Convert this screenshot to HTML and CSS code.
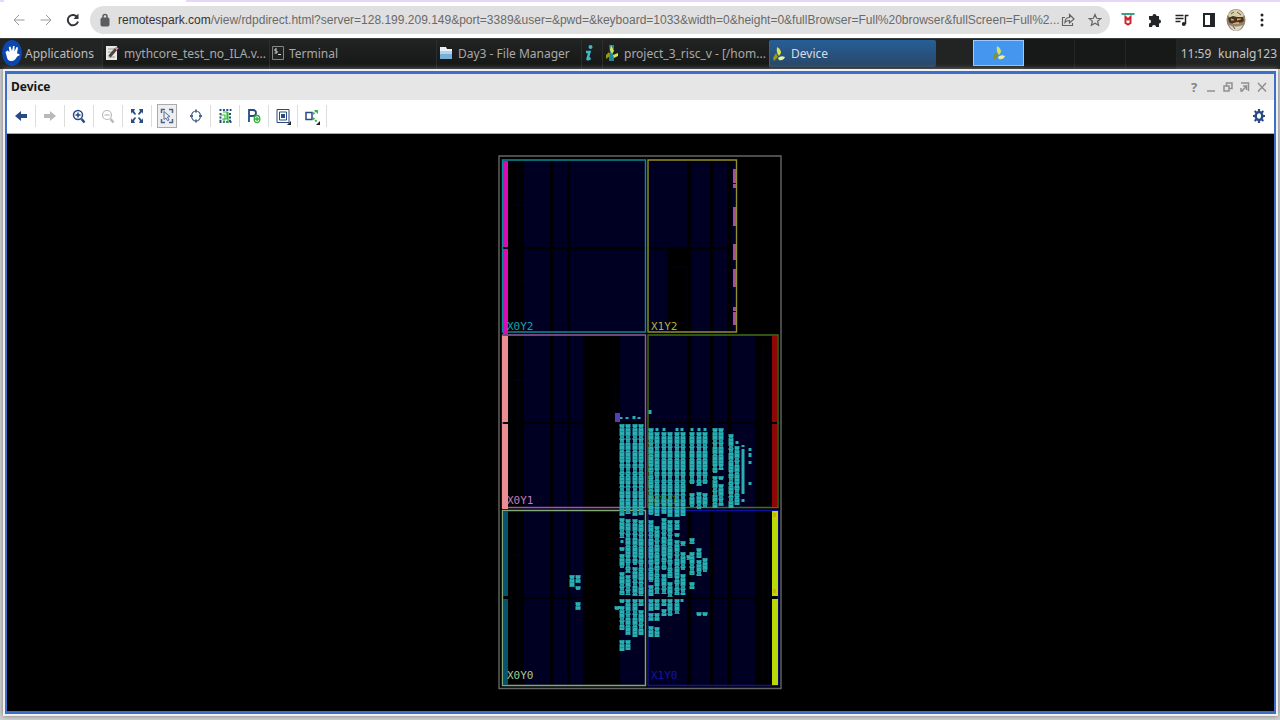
FILE: index.html
```
<!DOCTYPE html>
<html lang="en">
<head>
<meta charset="utf-8">
<title>Device</title>
<link rel="stylesheet" href="styles.css">
</head>
<body>
<header class="browser">
  <div class="tabstrip"><span class="tab"></span></div>
  <div class="navbar">
    <button class="nav-btn muted" aria-label="Back"><svg width="14" height="14" viewBox="0 0 14 14"><path d="M12.500 7H2M7 2L2 7l5 5"/></svg></button>
    <button class="nav-btn muted" aria-label="Forward"><svg width="14" height="14" viewBox="0 0 14 14"><path d="M1.500 7H12M7 2l5 5-5 5"/></svg></button>
    <button class="nav-btn reload" aria-label="Reload"><svg width="14" height="14" viewBox="0 0 14 14"><path d="M11.500 4.500A5.200 5.200 0 1 0 12 8.500"/><path class="solid" d="M12.500 0.500V6H7.500z"/></svg></button>
    <div class="address">
      <svg class="lock" width="10" height="14" viewBox="0 0 10 14"><rect x="1" y="5" width="8" height="8" rx="1"/><path d="M3 6V3.500a2 2 0 0 1 4 0V6"/></svg>
      <div class="url"><span class="host">remotespark.com</span>/view/rdpdirect.html?server=128.199.209.149&amp;port=3389&amp;user=&amp;pwd=&amp;keyboard=1033&amp;width=0&amp;height=0&amp;fullBrowser=Full%20browser&amp;fullScreen=Full%2...</div>
      <button class="pill-btn" aria-label="Share"><svg width="14" height="14" viewBox="0 0 14 14"><path d="M4 4.500H1.500v8h10V10M4 9.500c0-3.500 2-5 4.500-5V1.500L13 6 8.500 10V7.500C6.500 7.500 5 8 4 9.500z"/></svg></button>
      <button class="pill-btn" aria-label="Bookmark"><svg width="14" height="14" viewBox="0 0 14 14"><path d="M7 1.500l1.600 3.800 4.100.3-3.100 2.700 1 4L7 10.200l-3.600 2.100 1-4L1.300 5.600l4.100-.3z"/></svg></button>
    </div>
    <div class="extensions">
      <button aria-label="Shield"><svg width="14" height="16" viewBox="0 0 14 16"><path fill="#30a58a" d="M0.500 1h13v2H.5z"/><path fill="none" stroke="#d0202c" stroke-width="2" d="M4.500 5v6L7 12.500 9.500 11V5L7 7.500z"/></svg></button>
      <button aria-label="Extensions"><svg width="14" height="16" viewBox="0 0 14 16"><path fill="#222427" d="M1 4h3.500a2 2 0 1 1 4 0H11v3.500a2 2 0 1 1 0 4V15H8a2 2 0 0 0-4 0H1v-3.500a2 2 0 0 0 0-4z"/></svg></button>
      <button aria-label="Media"><svg width="14" height="16" viewBox="0 0 14 16"><path fill="none" stroke="#222427" stroke-width="1.500" d="M.5 3.500h8M.5 6.500h8M.5 9.500h5M10.500 12V3.500h3"/><circle cx="8.800" cy="12" r="2" fill="#222427"/></svg></button>
      <button aria-label="Side panel"><svg width="14" height="16" viewBox="0 0 14 16"><path fill="none" stroke="#222427" stroke-width="2" d="M2 2h10v12H2z"/><path fill="#222427" d="M8 2h4v12H8z"/></svg></button>
      <button aria-label="Profile"><svg width="20" height="22" viewBox="0 0 20 22"><ellipse cx="10" cy="11" rx="9.500" ry="11" fill="#94846b"/><path fill="#d8d0aa" d="M2 6Q10-5 18 6l-2 3H4z"/><path fill="#463321" d="M2 9l5-2 4 1 6 0 1 4q-4 3-7 1-5 3-8 0z"/><path fill="#e0aa55" d="M5 9.500l3 1v1H5zm6 0h4v1l-4 1zM7 14l6-1v2H7z"/><path fill="#d9d4cc" d="M3 16q6 3 14 0-2 5-7 6-5-1-7-6z"/><path stroke="#675644" d="M5 5l3-2M11 3l4 3M7 17l2 3"/></svg></button>
      <button aria-label="Menu"><svg width="6" height="16" viewBox="0 0 6 16"><g fill="#222427"><circle cx="3" cy="3" r="1.500"/><circle cx="3" cy="8" r="1.500"/><circle cx="3" cy="13" r="1.500"/></g></svg></button>
    </div>
  </div>
</header>

<nav class="taskbar">
  <button class="task apps"><svg width="20" height="26" viewBox="0 0 20 26"><ellipse cx="10" cy="13" rx="10" ry="13" fill="#0b47ad"/><path fill="#fff" d="M3.500 12l2-1.500 2 1.500-.7-5 1.700-.5L10 11l1-5h1.500v5.500L14.500 7l1.500.5-1 6q3 0 2.500 2-2 0-3 2-2 4-6 3.500-3-.5-3.500-3.500z"/></svg><span>Applications</span></button>
  <button class="task wide"><svg width="14" height="18" viewBox="0 0 14 18"><path fill="#e9e9e5" d="M1 2h11v14H1z"/><path stroke="#999" d="M3 5h7M3 8h4M3 13h7"/><path stroke="#4c463b" stroke-width="3" d="M4.500 12.500L11 5"/><path stroke="#db7ab1" stroke-width="3" d="M11 5l1.500-1.500"/></svg><span>mythcore_test_no_ILA.v...</span></button>
  <button class="task wide"><svg width="12" height="16" viewBox="0 0 12 16"><path fill="#202322" stroke="#858585" d="M.5 1.500h11v13H.5z"/><path fill="none" stroke="#ddd" d="M5 4H3v2h2v2H2.500M6 9.500h3"/></svg><span>Terminal</span></button>
  <button class="task files"><svg width="14" height="16" viewBox="0 0 14 16"><path fill="#e9eff4" d="M1 2h6l1 2h5v5H1z"/><path fill="#78afd9" d="M1 6h12v8H1z"/><path fill="#b3d2e9" d="M1 6h12v3H1z"/></svg><span>Day3 - File Manager</span></button>
  <button class="task info" aria-label="Information"><svg width="10" height="18" viewBox="0 0 10 18"><circle cx="6.500" cy="3" r="2" fill="#40b9cb"/><path fill="none" stroke="#40b9cb" stroke-width="2.500" d="M2 8h3.500L3.500 15q0 1 3-1"/></svg></button>
  <button class="task wide"><svg width="14" height="18" viewBox="0 0 14 18"><path fill="#258795" d="M4 1h5v4L7 8l2 4v5H4v-4H3V9h2z"/><path fill="#d8e456" d="M6 1l3 6-2 3-2-4zM8 11l5-2v3l-4 2z"/><path fill="#9c9a10" d="M4 8l1 4-4 3V11z"/></svg><span>project_3_risc_v - [/hom...</span></button>
  <button class="task wide active"><svg width="14" height="16" viewBox="0 0 14 16"><path fill="#d8e456" d="M5 1q4 2 4 6l-2 3Q4 7 5 1z"/><path fill="#9c9a10" d="M4 7l2 4-4 4-1-3z"/><path fill="#edf09b" d="M6 12q3-3 7-1-2 4-6 3z"/></svg><span>Device</span></button>
  <span class="spacer"></span>
  <button class="workspace current" aria-label="Workspace 1"><svg width="14" height="16" viewBox="0 0 14 16"><path fill="#d8e456" d="M5 1q4 2 4 6l-2 3Q4 7 5 1z"/><path fill="#89921c" d="M4 7l2 4-4 4-1-3z"/><path fill="#edf09b" d="M6 12q3-3 7-1-2 4-6 3z"/></svg></button>
  <button class="workspace" aria-label="Workspace 2"></button>
  <button class="workspace" aria-label="Workspace 3"></button>
  <button class="workspace" aria-label="Workspace 4"></button>
  <span class="clock">11:59</span>
  <span class="user">kunalg123</span>
</nav>

<main class="desktop">
<section class="window">
  <div class="titlebar">
    <h1>Device</h1>
    <div class="controls">
      <button class="help" aria-label="Help">?</button>
      <button aria-label="Minimize"><svg width="10" height="12" viewBox="0 0 10 12"><path d="M1 10h8"/></svg></button>
      <button aria-label="Restore"><svg width="10" height="12" viewBox="0 0 10 12"><path d="M1 5h5v5H1zM3.500 5V2H9v5.500H6"/></svg></button>
      <button aria-label="Float"><svg width="10" height="12" viewBox="0 0 10 12"><path d="M1 2h7.500v8M2 10l4.500-5M3 5h3.500v4M1 7v3h2"/></svg></button>
      <button aria-label="Close"><svg width="10" height="12" viewBox="0 0 10 12"><path d="M1 2l8 8.500M9 2L1 10.500"/></svg></button>
    </div>
  </div>
  <div class="toolbar">
    <button class="tool" aria-label="Previous"><svg width="16" height="18" viewBox="0 0 16 18"><path fill="#284b85" d="M2 9l6-5v3h6v4H8v3z"/></svg></button>
    <button class="tool" aria-label="Next" disabled><svg width="16" height="18" viewBox="0 0 16 18"><path fill="#b9b9b9" d="M14 9L8 4v3H2v4h6v3z"/></svg></button>
    <button class="tool" aria-label="Zoom in"><svg width="16" height="18" viewBox="0 0 16 18"><g fill="none" stroke="#284b85" stroke-width="1.500"><circle cx="7" cy="8" r="4.500"/><path d="M4.500 8h5M7 5.500v5"/><path stroke-width="2.500" d="M10.500 12l3 3.500"/></g></svg></button>
    <button class="tool" aria-label="Zoom out" disabled><svg width="16" height="18" viewBox="0 0 16 18"><g fill="none" stroke="#b9b9b9" stroke-width="1.200"><circle cx="7" cy="8" r="4.500"/><path d="M4.500 8h5"/><path stroke-width="2.500" d="M10.500 12l3 3.500"/></g></svg></button>
    <button class="tool" aria-label="Zoom fit"><svg width="16" height="18" viewBox="0 0 16 18"><path fill="#284b85" d="M2 2h4L5 4l2 3-1 1-3-3-1 2zM14 2h-4l1 2-2 3 1 1 3-3 1 2zM2 16h4l-1-2 2-3-1-1-3 3-1-2zM14 16h-4l1-2-2-3 1-1 3 3 1-2z"/></svg></button>
    <button class="tool pressed" aria-label="Select area"><svg width="16" height="18" viewBox="0 0 16 18"><path fill="none" stroke="#48658f" stroke-width="1.500" d="M2.500 6V2.500H6M10 2.500h3.500V6M2.500 12v3.500H6M10 15.500h3.500V12"/><path fill="#e6eef5" stroke="#55709c" d="M5 4.500l6 5-2.500.5 1.500 3-1.500.7L7 11l-2 1.500z"/></svg></button>
    <button class="tool" aria-label="Autofit selection"><svg width="16" height="18" viewBox="0 0 16 18"><g fill="none" stroke="#48658f" stroke-width="1.200"><ellipse cx="8" cy="9" rx="4.500" ry="5"/><path stroke-width="1.800" d="M8 2.500v3M8 12.500v3M2 9h3M11 9h3"/></g></svg></button>
    <button class="tool" aria-label="Routing resources"><svg width="16" height="18" viewBox="0 0 16 18"><path stroke="#284b85" stroke-width="2" stroke-dasharray="2 1.400" d="M2.500 3h12M2.500 15h12M3.500 6v9M13 6v9"/><path fill="none" stroke="#35ba3e" stroke-width="1.200" d="M6 5h4v7H7v4M3 8h5v4H5M11 5v11"/></svg></button>
    <button class="tool" aria-label="Draw Pblock"><svg width="16" height="18" viewBox="0 0 16 18"><path fill="none" stroke="#284b85" stroke-width="1.800" d="M3 15V3h4q3 0 3 3T7 9H3"/><ellipse cx="11" cy="12" rx="2.800" ry="3.500" fill="#fff" stroke="#2eae32" stroke-width="1.300"/><path stroke="#2eae32" stroke-width="1.300" d="M11 10v4M9 12h4"/></svg></button>
    <button class="tool" aria-label="Cell drawing"><svg width="16" height="18" viewBox="0 0 16 18"><g fill="none" stroke="#284b85"><path d="M2 2.500h12v13H2zM4.500 5h7v8h-7z"/></g><path fill="#284b85" d="M6 7h4v4H6z"/><path fill="#222" d="M16 14v4h-4z"/></svg></button>
    <button class="tool" aria-label="Show connections"><svg width="16" height="18" viewBox="0 0 16 18"><path fill="none" stroke="#284b85" stroke-width="1.500" d="M2 5.500h6v7H2z"/><path fill="none" stroke="#31b83a" stroke-width="2" stroke-dasharray="2 1" d="M9 7l4-4M9 11l4 4"/><path fill="#31b83a" d="M10 3h4v4z"/><path fill="#222" d="M16 14v4h-4z"/></svg></button>
    <button class="settings" aria-label="Settings"><svg width="14" height="16" viewBox="0 0 14 16"><ellipse cx="7" cy="8" rx="3.300" ry="4" fill="none" stroke="#284b85" stroke-width="2.500"/><path fill="none" stroke="#284b85" stroke-width="2.200" d="M7 1v2.500M7 12.500V15M1 8h2M11 8h2M2.700 3l1.500 1.500M9.800 11.500l1.500 1.500M2.700 13l1.500-1.500M9.800 4.500L11.300 3"/></svg></button>
  </div>
  <div class="canvas">
    <svg class="device" width="284" height="535" viewBox="498 155 284 535" role="img" aria-label="Device floorplan">
      <defs>
        <pattern id="grid" width="4" height="4" patternUnits="userSpaceOnUse"><path fill="#00001a" d="M0 0h4v4H0z"/><path fill="#000026" d="M0 0h4v1H0zM0 0h1v4H0z"/></pattern>
        <path id="cells" d="
M622 424V516M628 424V514M635 424V516M641 424V515
M622 518V538M622 547V551M622 554V568M622 572V595M622 599V603M622 606V630M622 640V651
M628 519V573M628 575V595M628 599V635M628 640V650
M635 519V565M635 567V596M635 599V637
M641 520V596M641 599V606M641 610V635
M651 428V515M651 520V582M651 585V596M651 599V611M651 613V621M651 626V637
M657 432V516M657 526V594M657 599V610M657 613V621M657 627V637
M664 432V514M664 518V570M664 574V594M664 599V606M664 609V616
M670 432V517M670 520V578M670 582V597M670 599V616
M677 432V517M677 520V530M677 533V537M677 540V595M677 599V614
M683 432V516M683 541V546M683 552V570M683 574V595
M692 432V484M692 493V507M692 538V544M692 552V575M692 582V589M689 555V560
M699 432V486M699 492V509M699 548V558M699 560V576M699 612V616
M705 432V484M705 493V508M705 558V572M705 612V616
M715 428V473M715 476V508M721 428V470M721 476V480M721 484V506
M731 434V508M737 446V505
M572 575V587M578 575V583M578 586V590M578 602V610M617 606V610"/>
      </defs>
      <g fill="url(#grid)">
        <path d="M524 161h26v524h-26zM553 161h14v524h-14zM570 161h75v170h-75zM570 336h13v349h-13zM620 336h25v349h-25z"/>
        <path d="M649 161h38v86h-38zM649 249h19v82h-19zM691 161h19v524h-19zM713 161h14v524h-14zM731 161h4v170h-4zM649 336h38v349h-38zM731 336h24v349h-24z"/>
      </g>
      <path class="faint" d="M509 205h15M518 161v86M514 249v80M518 281h6M509 380h15M518 336v165M509 555h15M518 511v160M670 267h17v64M615 417v-30h5M615 514v90M763 345v335M769 345v335"/>
      <path class="dark" d="M500 248h236M500 423h278M500 598h278"/>
      <g class="regions">
        <path stroke="#656565" d="M499 156h282v532.500H499z"/>
        <path stroke="#088c96" d="M502.500 160h143v172h-143z"/>
        <path stroke="#94902a" d="M648 160h88.500v172H648z"/>
        <path stroke="#9b5a9e" d="M502.500 335h143v172.500h-143z"/>
        <path stroke="#427019" d="M648 335h130v172.500H648z"/>
        <path stroke="#83a878" d="M502.500 510.500h143v175h-143z"/>
        <path stroke="#1010a0" d="M648 510.500h130v175H648z"/>
      </g>
      <g class="io">
        <path fill="#d90bb4" d="M503 161h5v86h-5zM503 249h5v85h-5z"/>
        <path fill="#eb8d92" d="M502 336h6v86h-6zM502 424h6v85h-6z"/>
        <path fill="#07526c" d="M503 511h5v85h-5zM503 599h5v86h-5z"/>
        <path fill="#8d0709" d="M772 336h5v86h-5zM772 424h5v83h-5z"/>
        <path fill="#b9d805" d="M772 511h6v85h-6zM772 599h6v86h-6z"/>
        <path fill="#f49a18" d="M773 513h3v4h-3zM773 589h3v4h-3z"/>
        <path fill="#a95095" d="M733 169h3v14h-3zM733 184h3v4h-3zM733 207h3v19h-3zM733 244h3v16h-3zM733 269h3v18h-3zM733 307h3v4h-3zM733 312h3v13h-3z"/>
      </g>
      <use class="cells-core" href="#cells"/>
      <use class="cells-edge" href="#cells"/>
      <use class="cells-lines" href="#cells"/>
      <path class="dots" d="M621 417v2M627 417v2M634 416v3M639 417v2M650 410v4M657 428v3M664 428v3M677 428v3M682 428v3M692 428v3M699 428v3M705 428v3M622 540v3M682 599v3M737 441v3M743 445v2M743 449v45M743 499v3M750 448v3M750 453v4M750 461v3M750 482v3"/>
      <path fill="#583eb2" d="M615 413h5v9h-5z"/>
      <text x="507" y="330" fill="#16a5ae">X0Y2</text>
      <text x="651" y="330" fill="#b3b33a">X1Y2</text>
      <text x="507" y="504" fill="#c27bba">X0Y1</text>
      <text x="651" y="504" fill="#609819" fill-opacity=".6">X1Y1</text>
      <text x="507" y="679" fill="#a9c890">X0Y0</text>
      <text x="651" y="679" fill="#1515a8">X1Y0</text>
    </svg>
  </div>
</section>
</main>
</body>
</html>
```
FILE: styles.css
```
* { box-sizing: border-box; }
body {
  margin: 0;
  min-height: 100vh;
  display: flex;
  flex-direction: column;
  background: #dadada;
  font-family: "Noto Sans", "Open Sans", sans-serif;
}
button {
  border: 0;
  padding: 0;
  background: none;
  color: inherit;
  font: inherit;
  display: flex;
  align-items: center;
  justify-content: center;
}
svg { display: block; flex: none; }

.browser { background: #fff; }
.tabstrip { height: 2px; background: #e9d5fb; padding-left: 4px; }
.tab { display: block; width: 182px; height: 2px; background: #fff; }
.navbar { display: flex; align-items: center; height: 36px; padding: 0 5px 0 5px; }
.nav-btn { width: 27px; height: 28px; }
.nav-btn.reload { width: 28px; margin-right: 3px; }
.nav-btn svg { fill: none; stroke: #333538; stroke-width: 2; }
.nav-btn.muted svg { stroke: #989898; stroke-width: 1; }
.nav-btn .solid { fill: #333538; stroke: none; }
.address {
  flex: 1;
  min-width: 0;
  display: flex;
  align-items: center;
  height: 28px;
  padding: 0 2px 0 10px;
  border-radius: 14px;
  background: #e0e0e0;
}
.lock { fill: #5b5d60; stroke: #5b5d60; }
.lock path { fill: none; stroke-width: 1.5; }
.url {
  flex: 1;
  min-width: 0;
  margin-left: 8px;
  color: #6a6a6a;
  font: 12px/24px "Liberation Sans", Arial, sans-serif;
  white-space: nowrap;
}
.host { color: #333; }
.pill-btn { width: 27px; height: 24px; }
.pill-btn svg { fill: none; stroke: #626466; stroke-width: 1.2; }
.extensions { display: flex; align-items: center; margin-left: 4px; }
.extensions button { width: 27px; height: 28px; }
.extensions button:last-child { width: 26px; }

.taskbar {
  display: flex;
  height: 31px;
  background: #222423;
  border-top: 1px solid #3c3e3d;
  color: #a9a9a9;
  font-size: 12px;
  white-space: nowrap;
}
.task {
  justify-content: flex-start;
  gap: 5px;
  min-width: 0;
  padding-left: 2px;
  padding-bottom: 2px;
  overflow: hidden;
  background: linear-gradient(#222423, #151616);
  border-left: 1px solid #2c2e2d;
}
.task.apps { flex: 0 0 102px; gap: 3px; padding-left: 2px; background: #222423; color: #bcbcbc; border-left: 0; }
.task.wide { flex: 0 1 167px; }
.task.files { flex: 0 1 145px; }
.task.info { flex: 0 0 21px; }
.task.active { background: linear-gradient(#265e99, #294766); color: #d4dde6; margin: 1px 0 2px; padding-bottom: 0; border-radius: 2px; border-color: #2a659f; }
.spacer { flex: 1; }
.workspace { flex: 0 0 51px; background: #171818; border-right: 1px solid #242625; }
.workspace.current { background: #4496ee; border: 1px solid #9ccaff; margin: 1px 0 3px; }
.clock, .user { display: flex; align-items: center; justify-content: center; padding-bottom: 2px; color: #c4c4c4; }
.clock { flex: 0 0 38px; }
.user { flex: 0 0 65px; }

.desktop { flex: 1; display: flex; padding: 2px 4px 6px 5px; background: #d0d0d0; }
.window {
  flex: 1;
  display: flex;
  flex-direction: column;
  border: 3px solid #3d70c4;
  border-left-width: 2px;
  border-right-width: 2px;
  box-shadow: 0 0 0 2px #f0f0f4, 0 0 5px 2px #777;
}
.titlebar { display: flex; align-items: center; justify-content: space-between; height: 26px; padding: 0 5px 0 4px; background: #e6e6e6; }
.titlebar h1 { margin: 0; color: #161616; font-size: 12px; font-weight: 700; line-height: 20px; }
.controls { display: flex; gap: 3px; color: #858585; }
.controls button { width: 14px; height: 16px; }
.controls svg { fill: none; stroke: #909090; stroke-width: 1.5; }
.controls .help { font-size: 13px; font-weight: 700; }
.toolbar { display: flex; align-items: center; height: 34px; padding-bottom: 1px; background: #fff; border-bottom: 1px solid #aaa; }
.tool { width: 29px; height: 22px; border-right: 1px solid #ddd; }
.tool.pressed { width: 20px; height: 24px; margin: 0 5px; border: 1px solid #aaa; background: #eee; }
.settings { margin-left: auto; width: 30px; height: 24px; }
.canvas { flex: 1; display: flex; justify-content: center; align-items: center; padding-right: 2px; background: #000; }

.device text { font: 11px "DejaVu Sans Mono", monospace; }
.regions { fill: none; stroke-width: 1.4; }
.faint { fill: none; stroke: #02021c; }
.dark { stroke: #000; stroke-width: 2; }
.dots { fill: none; stroke: #2aafb3; stroke-width: 3; }
.cells-core, .cells-edge, .cells-lines { fill: none; }
.cells-core { stroke: #249da1; stroke-width: 4; }
.cells-edge { stroke: #2aafb3; stroke-width: 5; stroke-dasharray: 3 1 8 2 2 3 7 1 11 2 4 4; }
.cells-lines { stroke: #086469; stroke-width: 3; stroke-opacity: .45; stroke-dasharray: 1 3 1 2; }
```
